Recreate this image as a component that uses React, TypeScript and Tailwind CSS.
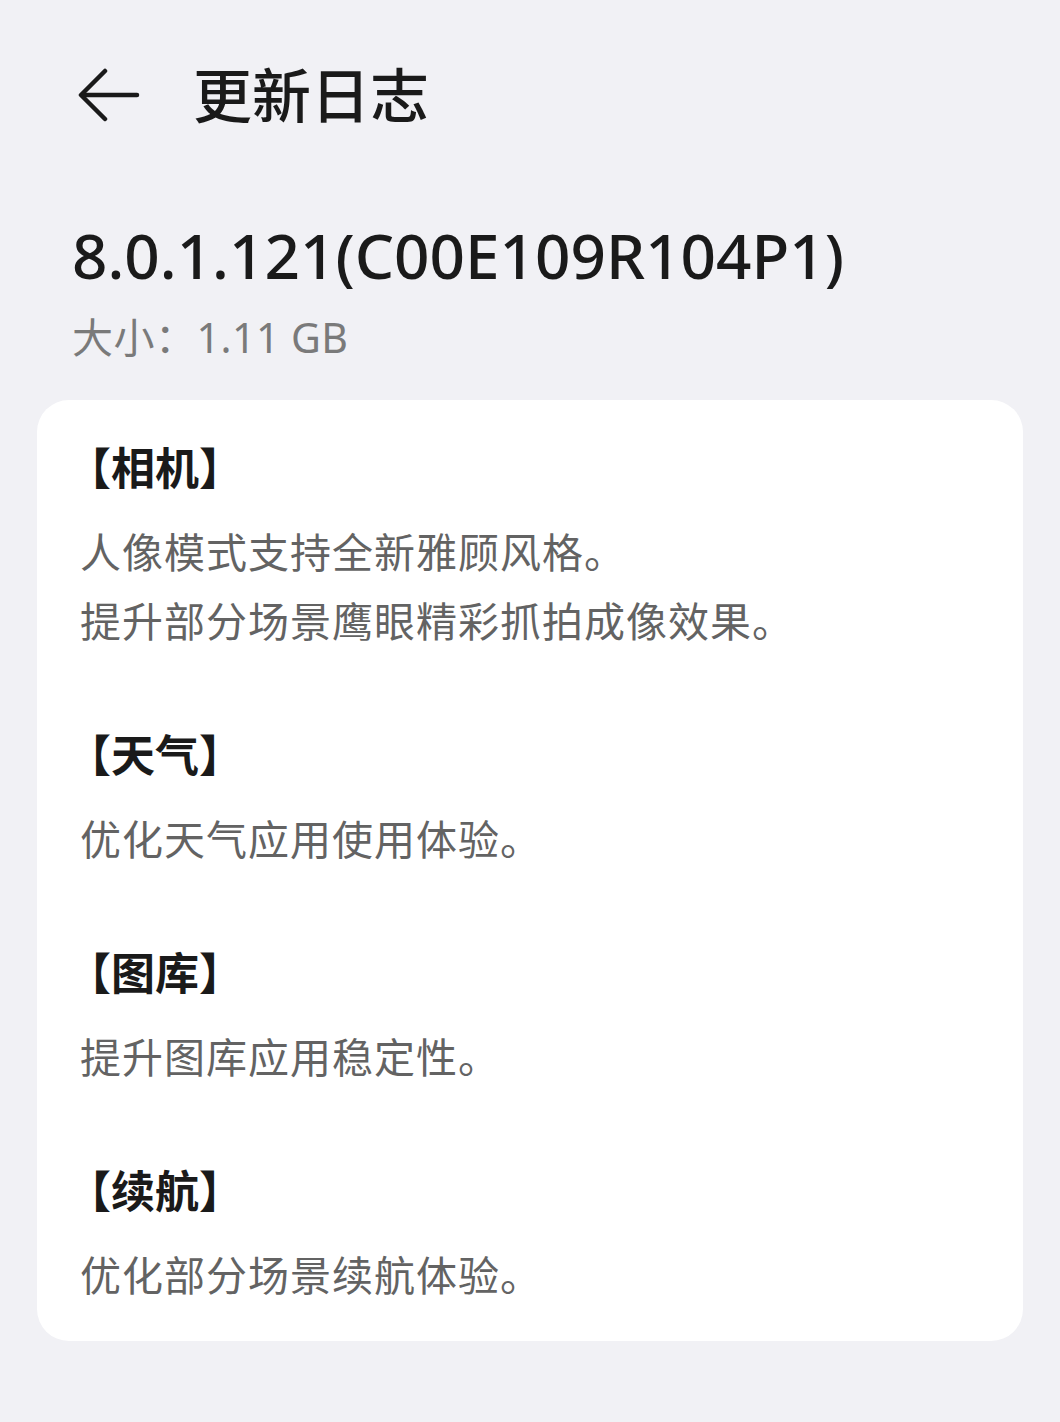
const sections = [
    { title: "【相机】", lines: ["人像模式支持全新雅顾风格。", "提升部分场景鹰眼精彩抓拍成像效果。"] },
    { title: "【天气】", lines: ["优化天气应用使用体验。"] },
    { title: "【图库】", lines: ["提升图库应用稳定性。"] },
    { title: "【续航】", lines: ["优化部分场景续航体验。"] },
];

const font = { fontFamily: '"Noto Sans", "Noto Sans CJK SC", sans-serif' };

const BackArrow = () => (
    <svg width="62" height="54" viewBox="0 0 62 54" fill="none" stroke="#1a1a1a" strokeWidth="4.5" strokeLinecap="round" strokeLinejoin="round">
        <path d="M27 3 L3 27 L27 51" />
        <path d="M4 27 H59" />
    </svg>
);

const App = () => {
    return (
        <div className="min-h-[1422px] w-[1060px] bg-[#f1f1f5]" style={font}>
            <div className="flex items-center h-[120px] pt-[70px] pl-[78px] gap-[53px]">
                <BackArrow />
                <span className="text-[59px] font-medium text-[#1a1a1a] leading-none">更新日志</span>
            </div>

            <div className="pl-[72px] pt-[104px]">
                <div className="text-[62px] font-medium text-[#1a1a1a] leading-[62px]">8.0.1.121(C00E109R104P1)</div>
                <div className="text-[41px] text-[#7a7a7a] leading-[50px] mt-[26px] tracking-[0.5px]">大小：1.11 GB</div>
            </div>

            <div className="mx-[37px] mt-[38px] bg-white rounded-[32px] pt-[38px] pb-[31px] pl-[43px] pr-[40px] flex flex-col gap-[69px]">
                {sections.map((s) => (
                    <div key={s.title} className="flex flex-col gap-[20px]">
                        <div className="text-[44px] font-bold text-[#1a1a1a] leading-[60px] -ml-[13px]">{s.title}</div>
                        <div className="flex flex-col">
                            {s.lines.map((line) => (
                                <span key={line} className="text-[41px] text-[#636363] leading-[69px] tracking-[1px]">{line}</span>
                            ))}
                        </div>
                    </div>
                ))}
            </div>
        </div>
    );
};

export default App;
